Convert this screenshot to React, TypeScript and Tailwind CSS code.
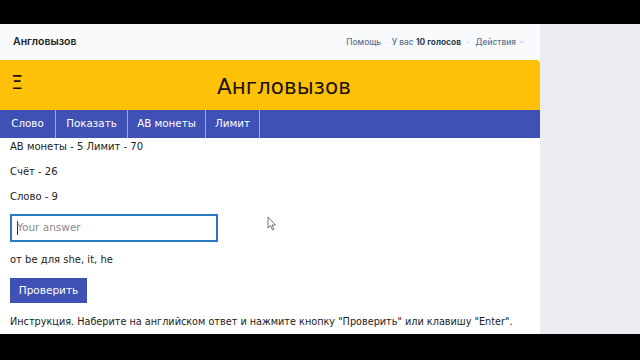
import { ChevronDown } from 'lucide-react';

const tabs = [
  { label: 'Слово', w: 'w-[56px]' },
  { label: 'Показать', w: 'w-[72px]' },
  { label: 'АВ монеты', w: 'w-[78px]' },
  { label: 'Лимит', w: 'w-[54px]' },
];

export default function App() {
  return (
    <div className="w-[640px] h-[360px] bg-black flex flex-col overflow-hidden relative">
      <div className="h-[24px]" />
      <div className="h-[310px] flex">
        <div className="w-[540px] bg-white flex flex-col">
          {/* top bar */}
          <div className="h-[36px] bg-[#f9fafb] flex items-center justify-between pl-[13px] pr-[14px] font-['Inter',sans-serif]">
            <span className="text-[10.5px] font-semibold text-[#222]">Англовызов</span>
            <div className="flex items-center text-[8.4px] text-[#5d7390] font-medium">
              <span>Помощь</span>
              <span className="mx-[4px] text-[#c5ccd5]">·</span>
              <span>
                У вас <b className="text-[#2c3e55] font-bold">10 голосов</b>
              </span>
              <span className="mx-[6px] text-[#c5ccd5]">·</span>
              <span>Действия</span>
              <ChevronDown className="w-[8px] h-[8px] ml-[2px] text-[#9aa7b8]" />
            </div>
          </div>

          {/* banner */}
          <div className="h-[50px] bg-[#ffc107] rounded-tr-[4px] flex items-center pl-[11px] font-['DejaVu_Sans',sans-serif] text-[#1a1208]">
            <span className="text-[19px] leading-none w-[20px] -mt-[6px]">Ξ</span>
            <span className="text-[21.5px] ml-[186px] mt-[5px]">Англовызов</span>
          </div>

          {/* tabs */}
          <div className="h-[28px] bg-[#3f51b5] flex font-['DejaVu_Sans',sans-serif] text-[10.3px] text-white">
            {tabs.map((t) => (
              <div key={t.label} className={`${t.w} h-full flex items-center justify-center border-r border-[#a3acd9]`}>
                {t.label}
              </div>
            ))}
          </div>

          {/* content */}
          <div className="px-[10px] pt-[1px] font-['DejaVu_Sans',sans-serif] text-[10px] text-[#222] flex flex-col">
            <p className="h-[16px] leading-[16px]">АВ монеты - 5 Лимит - 70</p>
            <p className="mt-[9px] h-[16px] leading-[16px]">Счёт - 26</p>
            <p className="mt-[9px] h-[16px] leading-[16px]">Слово - 9</p>
            <div className="mt-[9px] w-[208px] h-[28px] border-2 border-[#2b78c4] flex items-center pl-[5px] text-[10.5px] text-[#8a8a8a]">
              <span className="w-[1px] h-[14px] bg-[#333] mr-[-1px]" />
              Your answer
            </div>
            <p className="mt-[10px] h-[16px] leading-[16px]">от be для she, it, he</p>
            <div className="mt-[10px] w-[77px] h-[25px] bg-[#3f51b5] text-white flex items-center justify-center text-[10.5px]">
              Проверить
            </div>
            <p className="mt-[11px] h-[16px] leading-[16px] text-[9.7px] whitespace-nowrap">
              Инструкция. Наберите на английском ответ и нажмите кнопку "Проверить" или клавишу "Enter".
            </p>
          </div>
        </div>
        <div className="flex-1 bg-[#ebedf0]" />
      </div>

      {/* mouse cursor */}
      <svg className="absolute left-[267px] top-[216px]" width="10" height="15" viewBox="0 0 10 15">
        <path d="M1 1 L1 12 L3.5 9.5 L5.5 14 L7 13.3 L5 9 L8.5 9 Z" fill="#fff" stroke="#555" strokeWidth="0.8" />
      </svg>
    </div>
  );
}
